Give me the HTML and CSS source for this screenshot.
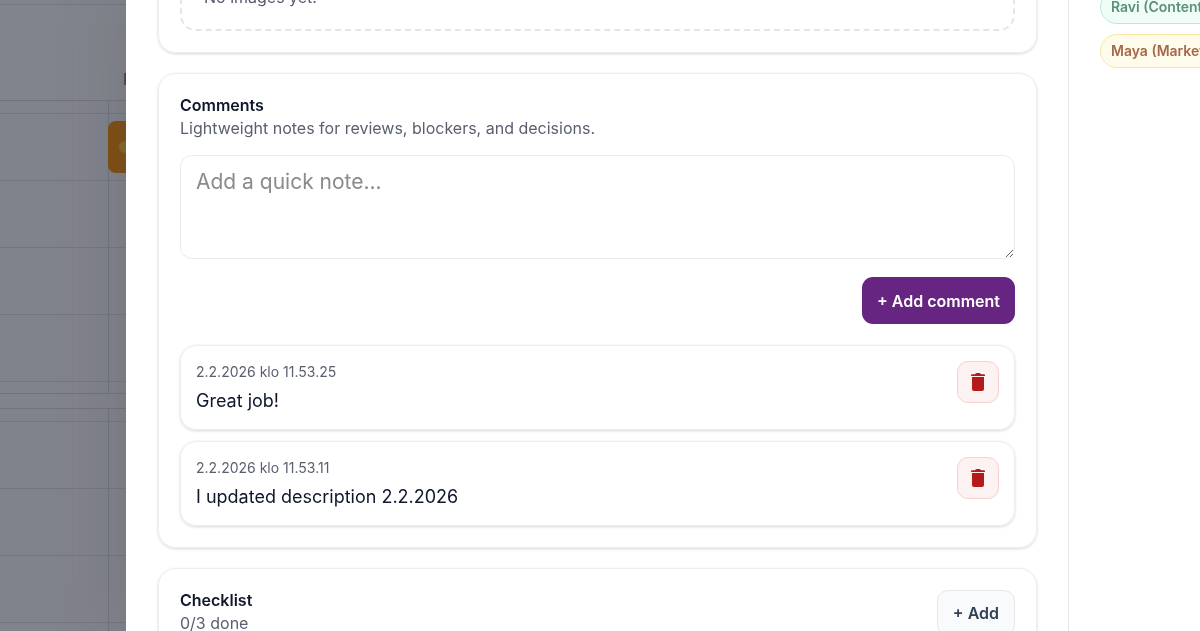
FILE: index.html
```html
<!DOCTYPE html>
<html lang="en">
<head>
    <meta charset="UTF-8">
    <meta name="viewport" content="width=device-width, initial-scale=1.0">
    <title>Task details</title>
    <link rel="stylesheet" href="styles.css">
</head>
<body>

    <div class="board">
        <div class="board-top"></div>
        <div class="board-header"><span>Mon</span></div>
        <div class="board-group">
            <div class="row row-small"><div class="row-label"></div></div>
            <div class="row"><div class="row-label"></div><div class="event"><span class="event-dot"></span></div></div>
            <div class="row"><div class="row-label"></div></div>
            <div class="row"><div class="row-label"></div></div>
            <div class="row"><div class="row-label"></div></div>
            <div class="row row-small"><div class="row-label"></div></div>
        </div>
        <div class="board-group">
            <div class="row row-small"><div class="row-label"></div></div>
            <div class="row"><div class="row-label"></div></div>
            <div class="row"><div class="row-label"></div></div>
            <div class="row"><div class="row-label"></div></div>
            <div class="row"><div class="row-label"></div></div>
        </div>
    </div>

    <div class="drawer">
        <main class="details">
            <section class="card images-card">
                <div class="empty-box">No images yet.</div>
            </section>

            <section class="card">
                <h2><label for="note">Comments</label></h2>
                <p class="hint">Lightweight notes for reviews, blockers, and decisions.</p>
                <form class="comment-form">
                    <textarea id="note" placeholder="Add a quick note..."></textarea>
                    <button type="button" class="btn btn-primary">+ Add comment</button>
                </form>
                <div class="comment-list">
                    <article class="comment">
                        <div>
                            <time>2.2.2026 klo 11.53.25</time>
                            <p>Great job!</p>
                        </div>
                        <button type="button" class="btn-delete" aria-label="Delete comment">
                            <svg viewBox="0 0 14 18" width="14" height="18"><path d="M0 2.400Q0 1.200 1.200 1.200H4Q4.800 0 6 0h2q1.200 0 2 1.200h2.800q1.200 0 1.200 1.200v.6H0zM1 4h12v12q0 2-2 2H3q-2 0-2-2z"/></svg>
                        </button>
                    </article>
                    <article class="comment">
                        <div>
                            <time>2.2.2026 klo 11.53.11</time>
                            <p>I updated description 2.2.2026</p>
                        </div>
                        <button type="button" class="btn-delete" aria-label="Delete comment">
                            <svg viewBox="0 0 14 18" width="14" height="18"><path d="M0 2.400Q0 1.200 1.200 1.200H4Q4.800 0 6 0h2q1.200 0 2 1.200h2.800q1.200 0 1.200 1.200v.6H0zM1 4h12v12q0 2-2 2H3q-2 0-2-2z"/></svg>
                        </button>
                    </article>
                </div>
            </section>

            <section class="card checklist">
                <div>
                    <h2>Checklist</h2>
                    <p class="hint">0/3 done</p>
                </div>
                <button type="button" class="btn btn-light">+ Add</button>
            </section>
        </main>

        <aside class="people">
            <span class="pill pill-green">Ravi (Content)</span>
            <span class="pill pill-yellow">Maya (Marketing)</span>
        </aside>
    </div>

</body>
</html>
```
FILE: styles.css
```css
* {
    box-sizing: border-box;
}
body {
    margin: 0;
    height: 100vh;
    overflow: hidden;
    font-family: Inter, "Liberation Sans", sans-serif;
    font-size: 16px;
    color: #0f172a;
    background: #80828c;
}
h2, p {
    margin: 0;
}

/* Timeline behind the drawer */
.board {
    height: 100vh;
    overflow: hidden;
}
.board-top {
    height: 5px;
    border-bottom: 1px solid #747680;
}
.board-header {
    height: 95px;
    padding: 60px 0 0 123px;
    line-height: 28px;
    font-weight: 600;
    color: #3c3f48;
    background: #80848c;
}
.board-group {
    margin-bottom: 14px;
    border-top: 1px solid #70727c;
    border-bottom: 1px solid #70727c;
}
.row {
    display: flex;
    align-items: center;
    height: 67px;
    border-top: 1px solid #73757f;
}
.row-small {
    height: 12px;
}
.row-small:first-child {
    border-top: none;
}
.row-label {
    flex: none;
    align-self: stretch;
    width: 109px;
    border-right: 1px solid #70727c;
}
.event {
    display: flex;
    align-items: center;
    width: 120px;
    height: 52px;
    padding-left: 11px;
    margin-left: -1px;
    border-radius: 8px;
    background: #7f4a0a;
}
.event-dot {
    width: 12px;
    height: 12px;
    border-radius: 50%;
    background: #85661a;
}

/* Drawer */
.drawer {
    position: fixed;
    top: 0;
    right: 0;
    bottom: 0;
    left: 126px;
    display: flex;
    overflow: hidden;
    background: #fff;
    box-shadow: 0 0 60px rgba(100, 100, 100, 0.4);
}
.details {
    flex: 1;
    display: flex;
    flex-direction: column;
    gap: 20px;
    margin-top: -61px;
    padding: 0 31px 0 32px;
}
.card {
    padding: 21px;
    border: 1px solid #eceef0;
    border-radius: 18px;
    box-shadow: 0 1px 3px rgba(0, 0, 0, 0.16);
}
.empty-box {
    padding: 23px 22px 21px;
    border: 2px dashed #e2e5ea;
    border-radius: 16px;
    line-height: 22px;
    color: #565970;
}
h2 {
    font-size: 16px;
    line-height: 20px;
    font-weight: 600;
}
.hint {
    line-height: 26px;
    color: #5b6070;
}
.comment-form {
    display: flex;
    flex-direction: column;
    align-items: flex-end;
    gap: 18px;
    margin-top: 14px;
}
textarea {
    display: block;
    width: 100%;
    height: 104px;
    padding: 12px 15px;
    border: 1px solid #e8eaed;
    border-radius: 12px;
    font: inherit;
    font-size: 21px;
    line-height: 28px;
    resize: vertical;
}
textarea::placeholder {
    color: #8b8b8b;
}
.btn {
    height: 47px;
    padding: 0 14px;
    border: 1px solid transparent;
    border-radius: 11px;
    font: inherit;
    font-weight: 600;
    cursor: pointer;
}
.btn-primary {
    color: #fff;
    background: #662580;
}
.btn-light {
    height: 46px;
    padding: 0 15px;
    color: #334155;
    border-color: #e5e7eb;
    background: #f8fafc;
}
.comment-list {
    display: flex;
    flex-direction: column;
    gap: 11px;
    margin-top: 21px;
}
.comment {
    display: flex;
    justify-content: space-between;
    align-items: flex-start;
    height: 85px;
    padding: 15px;
    border: 1px solid #eceef0;
    border-radius: 16px;
    box-shadow: 0 1px 3px rgba(0, 0, 0, 0.16);
}
.comment time {
    display: block;
    font-size: 14px;
    line-height: 22px;
    color: #5b6070;
}
.comment p {
    margin-top: 4px;
    font-size: 18px;
    line-height: 28px;
}
.btn-delete {
    display: flex;
    align-items: center;
    justify-content: center;
    width: 42px;
    height: 42px;
    padding: 0;
    border: 1px solid #f5d0d3;
    border-radius: 11px;
    background: #fdf2f2;
    cursor: pointer;
}
.btn-delete svg {
    fill: #b31b1b;
}
.checklist {
    display: flex;
    justify-content: space-between;
    align-items: flex-start;
}

/* Assignees */
.people {
    flex: none;
    display: flex;
    flex-direction: column;
    align-items: flex-start;
    gap: 10px;
    width: 132px;
    margin-top: -10px;
    padding-left: 31px;
    border-left: 1px solid #e5e7eb;
}
.pill {
    padding: 0 10px;
    border: 1px solid;
    border-radius: 17px;
    font-size: 14px;
    line-height: 32px;
    font-weight: 600;
    white-space: nowrap;
}
.pill-green {
    color: #5b917c;
    border-color: #b7ecd3;
    background: #f0fdf7;
}
.pill-yellow {
    color: #a5684a;
    border-color: #f8e7a4;
    background: #fffbeb;
}
```
